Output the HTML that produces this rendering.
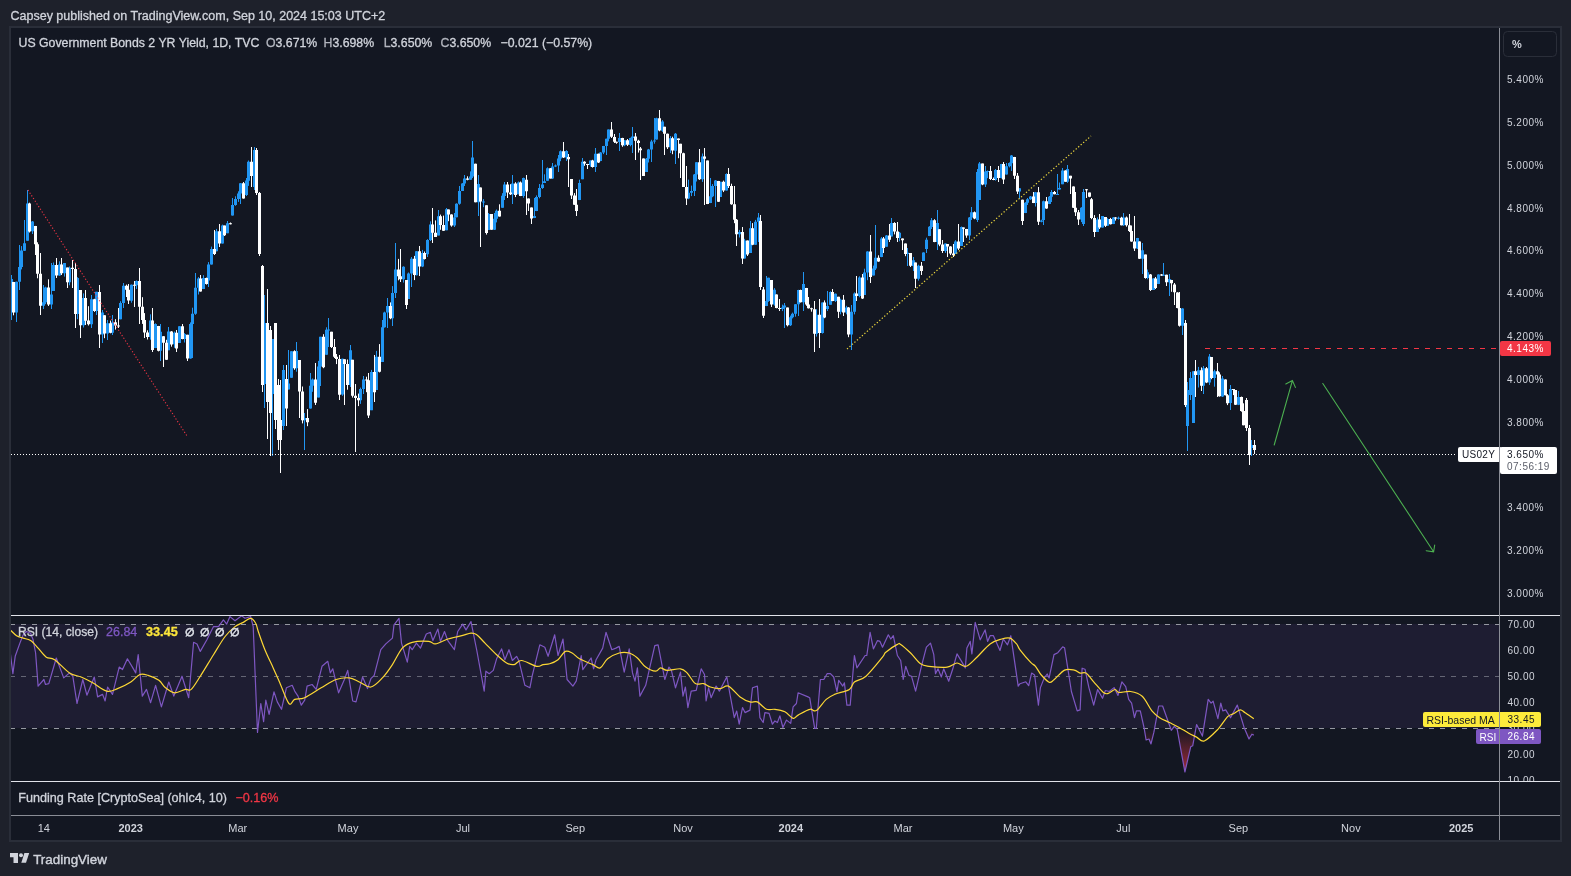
<!DOCTYPE html>
<html><head><meta charset="utf-8"><style>
html,body{margin:0;padding:0;}
body{width:1571px;height:876px;background:#1e212b;position:relative;overflow:hidden;font-family:"Liberation Sans", sans-serif;}
.t{position:absolute;white-space:pre;line-height:1;}
svg{position:absolute;left:0;top:0;will-change:transform;}
text{paint-order:stroke;}
</style></head><body>
<svg width="1571" height="876" viewBox="0 0 1571 876" font-family='"Liberation Sans", sans-serif'>
<defs>
<clipPath id="pp"><rect x="11" y="28" width="1488" height="587"/></clipPath>
<clipPath id="rp"><rect x="11" y="616" width="1488" height="165"/></clipPath>
<clipPath id="ra"><rect x="1500" y="616" width="60" height="165"/></clipPath>
<clipPath id="os"><rect x="11" y="728.5" width="1488" height="52"/></clipPath>
<linearGradient id="og" x1="0" y1="728" x2="0" y2="780" gradientUnits="userSpaceOnUse">
<stop offset="0" stop-color="#f23645" stop-opacity="0"/><stop offset="1" stop-color="#f23645" stop-opacity="0.75"/>
</linearGradient>
</defs>
<!-- frame -->
<rect x="9" y="26" width="1553" height="816" fill="#2a2e39"/>
<rect x="11" y="28" width="1549" height="812" fill="#131722"/>
<!-- price pane -->
<g clip-path="url(#pp)">
<path d="M11.5 275.0V320.0M16.5 281.6V322.0M19.5 245.0V290.0M21.5 246.1V269.4M24.5 220.0V251.0M27.5 190.0V240.8M32.5 221.0V234.0M43.5 285.0V309.0M45.5 286.7V304.2M51.5 263.0V309.0M53.5 262.5V291.0M59.5 261.3V275.8M64.5 263.0V276.6M69.5 266.5V285.3M77.5 277.2V319.2M83.5 293.4V327.5M91.5 295.0V328.0M96.5 291.8V315.0M102.5 310.0V343.0M107.5 320.0V340.0M112.5 315.0V335.0M120.5 301.2V319.3M123.5 283.0V308.0M131.5 284.5V302.7M136.5 280.4V289.0M150.5 314.3V339.7M155.5 323.3V348.1M160.5 324.0V361.0M168.5 327.0V350.2M174.5 331.5V347.8M179.5 326.2V343.0M184.5 333.1V342.5M190.5 322.4V358.7M192.5 307.7V358.0M195.5 273.0V314.8M198.5 277.1V294.5M203.5 275.2V289.1M208.5 262.1V287.0M211.5 246.6V264.6M216.5 228.9V251.3M222.5 224.6V243.6M227.5 221.0V233.2M232.5 198.0V215.6M235.5 196.3V205.8M238.5 191.3V201.9M240.5 183.0V204.0M246.5 178.0V196.0M248.5 160.5V185.9M254.5 147.0V190.0M264.5 295.0V408.0M272.5 339.0V456.0M283.5 365.0V430.0M288.5 350.0V389.4M291.5 351.2V377.8M296.5 342.0V371.7M304.5 413.0V450.0M310.5 373.0V408.6M312.5 378.5V391.8M318.5 360.9V397.4M320.5 336.8V386.0M326.5 327.3V354.8M328.5 318.0V347.0M342.5 358.7V395.8M350.5 345.0V387.0M360.5 387.6V403.9M363.5 376.0V394.0M371.5 369.9V410.1M376.5 350.9V390.0M382.5 320.0V362.0M384.5 311.7V327.6M387.5 298.0V328.0M392.5 286.1V326.0M395.5 243.0V298.0M403.5 266.3V282.6M408.5 272.5V298.9M411.5 257.0V287.0M416.5 251.0V275.4M422.5 249.9V267.1M427.5 239.2V257.0M430.5 221.3V241.0M438.5 210.0V235.4M446.5 208.0V230.2M454.5 213.0V227.0M456.5 203.3V217.3M459.5 186.0V204.7M462.5 183.1V191.0M464.5 175.0V186.0M470.5 171.4V179.7M472.5 141.0V178.1M478.5 175.0V216.0M483.5 199.1V207.2M488.5 213.0V230.0M494.5 213.0V230.0M496.5 209.5V222.4M502.5 193.2V207.7M504.5 182.0V200.0M512.5 175.0V204.0M518.5 181.5V194.3M523.5 177.6V197.8M534.5 198.0V218.1M536.5 195.4V211.1M539.5 184.0V198.3M542.5 160.0V188.9M544.5 174.3V182.9M547.5 167.4V180.8M552.5 163.0V179.0M555.5 164.5V167.1M558.5 155.0V172.0M560.5 150.4V161.2M566.5 150.2V161.0M579.5 179.7V200.1M582.5 158.0V179.2M590.5 160.4V166.7M595.5 148.0V172.0M600.5 152.1V161.2M603.5 145.9V154.1M606.5 138.7V155.0M608.5 129.4V141.4M619.5 133.0V151.0M624.5 140.1V146.2M630.5 137.7V146.3M632.5 127.0V153.0M646.5 158.0V171.9M648.5 148.9V162.5M651.5 139.8V162.0M654.5 118.0V143.7M656.5 117.7V139.6M662.5 120.1V131.9M670.5 136.0V153.0M675.5 133.0V164.0M688.5 179.6V199.2M691.5 185.6V196.1M694.5 174.0V196.0M696.5 162.1V181.5M702.5 153.5V181.9M710.5 178.0V203.1M712.5 184.1V197.2M715.5 180.0V207.0M720.5 181.8V197.0M726.5 173.3V190.5M739.5 229.9V237.5M744.5 238.8V258.5M750.5 221.0V253.0M755.5 219.9V244.9M758.5 213.0V242.0M766.5 276.0V306.1M768.5 277.7V301.8M774.5 288.1V305.7M782.5 304.6V311.1M784.5 303.0V328.0M790.5 315.6V326.0M792.5 312.6V318.4M795.5 304.1V316.7M798.5 289.8V316.0M803.5 272.0V311.0M816.5 309.2V336.6M822.5 302.5V333.6M827.5 291.0V311.0M830.5 291.3V304.6M835.5 293.5V302.0M840.5 298.7V314.3M846.5 305.8V314.3M851.5 305.0V350.0M854.5 292.4V314.4M859.5 276.3V297.3M864.5 268.7V295.0M867.5 251.2V280.2M873.5 265.6V275.4M875.5 225.0V270.0M881.5 237.0V257.2M886.5 235.0V246.7M891.5 218.0V236.4M899.5 232.0V241.3M907.5 248.0V266.0M913.5 257.0V271.0M918.5 264.7V280.6M923.5 252.3V261.0M926.5 237.7V253.0M929.5 226.1V236.1M931.5 218.0V229.0M937.5 210.0V250.0M945.5 243.4V252.9M955.5 240.2V253.9M961.5 226.5V245.9M969.5 217.0V240.0M971.5 207.0V220.0M977.5 169.0V222.0M979.5 162.0V199.9M985.5 166.0V187.0M987.5 170.5V178.2M995.5 169.0V180.7M1001.5 163.9V178.4M1006.5 163.0V174.6M1009.5 162.4V167.4M1011.5 155.0V171.0M1019.5 188.2V199.0M1025.5 202.2V213.1M1027.5 198.0V205.0M1030.5 196.0V199.9M1035.5 191.9V206.5M1041.5 219.7V222.3M1043.5 200.6V225.0M1049.5 196.0V204.1M1051.5 190.0V202.0M1057.5 174.0V194.3M1059.5 182.5V189.5M1062.5 168.0V184.2M1067.5 165.0V182.9M1081.5 207.2V222.1M1083.5 189.0V226.0M1097.5 217.4V232.0M1102.5 216.0V227.6M1107.5 218.2V225.7M1113.5 217.0V224.1M1118.5 216.6V219.6M1123.5 213.0V226.0M1137.5 237.9V249.0M1142.5 243.0V274.0M1147.5 269.5V279.3M1153.5 278.2V290.0M1158.5 274.4V284.1M1163.5 263.0V275.8M1169.5 274.0V296.0M1182.5 308.2V335.0M1187.5 382.0V451.0M1190.5 372.0V400.0M1193.5 371.2V422.9M1198.5 366.9V387.5M1203.5 366.0V394.0M1209.5 354.0V385.0M1214.5 369.7V386.7M1222.5 376.0V397.0M1230.5 385.0V410.0M1238.5 391.0V405.1M1251.5 440.0V456.0" stroke="#2196f3" stroke-width="1" fill="none"/><path d="M10 278.9h3v19.6h-3zM15 281.8h3v30.8h-3zM18 267.0h3v14.8h-3zM20 250.6h3v16.4h-3zM23 243.3h3v7.4h-3zM26 203.5h3v37.3h-3zM31 221.5h3v9.8h-3zM42 302.2h3v3.5h-3zM44 287.4h3v14.8h-3zM50 294.6h3v9.9h-3zM52 265.0h3v26.0h-3zM58 264.5h3v11.1h-3zM63 263.1h3v10.2h-3zM68 267.8h3v14.5h-3zM76 277.9h3v36.2h-3zM82 298.1h3v27.2h-3zM90 299.3h3v25.0h-3zM95 291.8h3v19.3h-3zM101 312.5h3v21.9h-3zM106 323.2h3v10.2h-3zM111 322.3h3v10.4h-3zM119 303.1h3v16.2h-3zM122 285.7h3v17.4h-3zM130 284.8h3v15.9h-3zM135 281.0h3v4.3h-3zM149 320.6h3v16.3h-3zM154 324.0h3v24.1h-3zM159 331.8h3v18.9h-3zM167 331.4h3v18.8h-3zM173 332.7h3v11.6h-3zM178 326.2h3v16.7h-3zM183 333.9h3v5.2h-3zM189 324.1h3v34.5h-3zM191 313.8h3v10.3h-3zM194 287.8h3v26.0h-3zM197 278.5h3v9.3h-3zM202 278.0h3v11.1h-3zM207 264.4h3v16.1h-3zM210 248.9h3v15.6h-3zM215 231.3h3v20.0h-3zM221 225.6h3v18.0h-3zM226 223.2h3v10.0h-3zM231 204.9h3v10.6h-3zM234 198.9h3v6.1h-3zM237 193.4h3v5.5h-3zM239 183.2h3v10.2h-3zM245 180.6h3v14.4h-3zM247 161.8h3v18.9h-3zM253 150.0h3v37.0h-3zM263 323.0h3v61.0h-3zM271 339.0h3v55.0h-3zM282 370.0h3v56.0h-3zM287 383.6h3v5.8h-3zM290 351.2h3v26.6h-3zM295 351.0h3v17.2h-3zM303 418.0h3v2.3h-3zM309 385.7h3v22.9h-3zM311 379.4h3v6.3h-3zM317 366.6h3v30.8h-3zM319 336.8h3v29.8h-3zM325 329.7h3v25.1h-3zM327 329.5h3v1.0h-3zM341 358.8h3v35.8h-3zM349 350.3h3v34.8h-3zM359 389.0h3v11.3h-3zM362 379.6h3v9.4h-3zM370 372.1h3v38.1h-3zM375 356.8h3v33.2h-3zM381 327.2h3v34.8h-3zM383 312.5h3v14.7h-3zM386 306.0h3v6.5h-3zM391 293.0h3v25.3h-3zM394 269.5h3v23.5h-3zM402 266.7h3v12.6h-3zM407 273.5h3v25.4h-3zM410 258.8h3v14.6h-3zM415 251.2h3v24.0h-3zM421 253.1h3v13.4h-3zM426 240.1h3v14.2h-3zM429 224.6h3v15.5h-3zM437 216.2h3v19.2h-3zM445 209.3h3v20.9h-3zM453 217.4h3v8.1h-3zM455 203.8h3v13.5h-3zM458 190.9h3v12.9h-3zM461 183.5h3v7.5h-3zM463 178.4h3v5.1h-3zM469 176.6h3v3.2h-3zM471 157.5h3v19.1h-3zM477 183.9h3v18.4h-3zM482 201.6h3v1.0h-3zM487 214.1h3v15.9h-3zM493 218.8h3v10.9h-3zM495 210.7h3v8.1h-3zM501 195.8h3v11.9h-3zM503 184.4h3v11.5h-3zM511 183.4h3v10.8h-3zM517 182.4h3v11.8h-3zM522 178.0h3v18.1h-3zM533 215.9h3v2.2h-3zM535 197.0h3v14.1h-3zM538 188.0h3v9.0h-3zM541 184.5h3v3.6h-3zM543 181.3h3v1.6h-3zM546 168.3h3v12.5h-3zM551 166.6h3v11.9h-3zM554 165.4h3v1.2h-3zM557 158.4h3v7.0h-3zM559 151.3h3v7.2h-3zM565 151.1h3v6.3h-3zM578 183.1h3v16.9h-3zM581 161.8h3v17.5h-3zM589 160.5h3v4.4h-3zM594 153.8h3v13.3h-3zM599 152.4h3v8.7h-3zM602 146.0h3v6.5h-3zM605 138.7h3v7.3h-3zM607 129.6h3v9.1h-3zM618 137.9h3v4.2h-3zM623 140.3h3v5.0h-3zM629 138.1h3v6.8h-3zM631 136.4h3v1.6h-3zM645 158.7h3v13.3h-3zM647 149.6h3v9.1h-3zM650 141.6h3v8.0h-3zM653 140.5h3v1.1h-3zM655 118.3h3v21.3h-3zM661 121.6h3v9.1h-3zM669 138.3h3v8.9h-3zM674 133.8h3v16.9h-3zM687 192.7h3v5.8h-3zM690 191.1h3v1.7h-3zM693 174.5h3v16.5h-3zM695 162.3h3v12.3h-3zM701 156.5h3v22.7h-3zM709 196.3h3v6.8h-3zM711 185.9h3v10.4h-3zM714 180.5h3v5.4h-3zM719 181.8h3v15.2h-3zM725 173.9h3v16.6h-3zM738 232.1h3v2.1h-3zM743 240.6h3v17.9h-3zM749 228.3h3v24.6h-3zM754 221.8h3v23.0h-3zM757 217.5h3v4.3h-3zM765 301.0h3v5.1h-3zM767 277.8h3v23.2h-3zM773 289.7h3v14.8h-3zM781 307.5h3v1.4h-3zM783 305.5h3v2.0h-3zM789 317.2h3v8.0h-3zM791 313.7h3v3.5h-3zM794 304.3h3v9.4h-3zM797 289.9h3v14.4h-3zM802 284.1h3v18.2h-3zM815 314.7h3v19.1h-3zM821 302.5h3v30.5h-3zM826 305.9h3v3.2h-3zM829 291.9h3v12.8h-3zM834 293.7h3v7.3h-3zM839 299.8h3v11.9h-3zM845 307.4h3v5.2h-3zM850 311.7h3v22.9h-3zM853 293.4h3v18.3h-3zM858 277.6h3v18.5h-3zM863 272.4h3v22.6h-3zM866 251.6h3v20.8h-3zM872 268.6h3v6.8h-3zM874 257.8h3v10.8h-3zM880 238.4h3v18.7h-3zM885 235.4h3v11.4h-3zM890 223.1h3v13.4h-3zM898 232.8h3v5.1h-3zM906 252.7h3v1.4h-3zM912 260.2h3v5.7h-3zM917 265.8h3v13.0h-3zM922 252.4h3v8.6h-3zM925 239.7h3v9.2h-3zM928 226.8h3v9.3h-3zM930 220.2h3v6.7h-3zM936 223.1h3v18.9h-3zM944 243.6h3v7.4h-3zM954 241.5h3v12.4h-3zM960 226.9h3v19.0h-3zM968 217.5h3v17.9h-3zM970 212.3h3v5.2h-3zM976 172.0h3v48.0h-3zM978 163.6h3v36.3h-3zM984 171.6h3v12.9h-3zM986 171.0h3v1.0h-3zM994 170.0h3v9.9h-3zM1000 164.0h3v13.9h-3zM1005 166.2h3v8.4h-3zM1008 163.1h3v3.1h-3zM1010 155.6h3v7.6h-3zM1018 188.3h3v3.3h-3zM1024 202.7h3v10.4h-3zM1026 199.2h3v3.5h-3zM1029 196.4h3v2.8h-3zM1034 192.3h3v10.7h-3zM1040 220.4h3v1.4h-3zM1042 201.3h3v18.7h-3zM1048 196.8h3v7.2h-3zM1050 191.9h3v4.9h-3zM1056 194.1h3v1.0h-3zM1058 188.1h3v1.4h-3zM1061 170.5h3v13.7h-3zM1066 169.1h3v12.6h-3zM1080 207.7h3v11.9h-3zM1082 192.0h3v32.0h-3zM1096 219.4h3v12.5h-3zM1101 216.0h3v11.5h-3zM1106 219.0h3v6.7h-3zM1112 217.5h3v6.6h-3zM1117 217.7h3v1.0h-3zM1122 217.5h3v7.7h-3zM1136 238.0h3v10.5h-3zM1141 250.3h3v8.5h-3zM1146 272.2h3v5.9h-3zM1152 278.5h3v11.4h-3zM1157 274.5h3v9.6h-3zM1162 274.8h3v1.0h-3zM1168 278.9h3v3.4h-3zM1181 308.6h3v17.1h-3zM1186 390.0h3v36.0h-3zM1189 378.0h3v17.0h-3zM1192 371.3h3v51.7h-3zM1197 370.3h3v4.6h-3zM1202 368.3h3v17.4h-3zM1208 356.5h3v26.0h-3zM1213 371.2h3v6.7h-3zM1221 378.5h3v17.9h-3zM1229 389.1h3v14.0h-3zM1237 396.9h3v7.8h-3zM1250 445.0h3v3.0h-3z" fill="#2196f3"/><path d="M13.5 281.9V315.3M29.5 202.7V232.5M35.5 225.9V255.0M37.5 242.3V278.3M40.5 253.0V315.0M48.5 279.3V306.0M56.5 258.0V278.0M61.5 258.0V275.0M67.5 267.6V288.0M72.5 260.0V288.0M75.5 263.0V328.0M80.5 290.0V338.0M85.5 290.0V325.0M88.5 306.2V325.5M94.5 298.8V311.9M99.5 285.0V348.0M104.5 315.3V338.2M110.5 320.6V333.3M115.5 319.2V329.6M118.5 308.0V328.0M126.5 284.6V297.0M128.5 284.0V304.0M134.5 281.0V307.0M139.5 268.0V324.0M142.5 297.2V323.9M144.5 313.1V338.0M147.5 330.3V339.5M152.5 308.0V352.0M158.5 325.9V351.4M163.5 336.2V367.0M166.5 339.8V359.9M171.5 331.1V346.7M176.5 330.0V352.0M182.5 324.0V339.3M187.5 334.8V361.0M200.5 275.0V291.6M206.5 277.6V284.6M214.5 230.0V255.0M219.5 224.0V247.0M224.5 225.6V236.0M230.5 222.5V224.4M243.5 182.0V198.6M251.5 147.0V187.0M256.5 148.0V195.0M259.5 192.0V256.0M262.5 265.0V392.0M267.5 289.0V439.0M270.5 326.0V456.0M275.5 323.0V429.0M278.5 379.0V450.0M280.5 380.0V473.0M286.5 365.0V426.0M294.5 350.3V369.8M299.5 360.0V418.0M302.5 386.5V423.4M307.5 409.1V426.2M315.5 363.0V405.0M323.5 334.2V368.2M331.5 331.8V348.0M334.5 339.0V358.0M336.5 354.0V364.1M339.5 355.0V400.0M344.5 359.3V405.0M347.5 359.5V389.7M352.5 359.8V397.6M355.5 384.0V452.0M358.5 393.6V406.1M366.5 376.7V392.2M368.5 373.0V418.0M374.5 355.0V402.0M379.5 344.1V372.4M390.5 302.4V319.2M398.5 258.9V280.3M400.5 249.0V282.0M406.5 280.0V309.0M414.5 255.9V280.1M419.5 246.0V276.0M424.5 251.5V259.5M432.5 208.0V243.0M435.5 220.4V236.9M440.5 214.6V229.8M443.5 215.6V230.9M448.5 209.5V221.2M451.5 214.3V226.7M467.5 176.3V180.3M475.5 163.7V202.3M480.5 187.5V247.0M486.5 205.3V234.6M491.5 214.0V229.8M499.5 204.3V216.6M507.5 182.0V198.0M510.5 184.2V195.0M515.5 182.2V197.1M520.5 181.5V196.1M526.5 175.0V215.0M528.5 198.5V211.0M531.5 207.5V224.0M550.5 168.0V178.5M563.5 142.0V158.0M568.5 154.0V187.0M571.5 179.1V199.0M574.5 193.1V204.8M576.5 189.0V216.0M584.5 161.2V165.8M587.5 163.9V169.0M592.5 159.8V167.6M598.5 153.6V163.0M611.5 122.0V138.0M614.5 134.0V143.0M616.5 141.7V143.8M622.5 137.8V146.8M627.5 139.0V146.0M635.5 133.0V160.0M638.5 139.8V152.6M640.5 147.0V180.0M643.5 158.5V176.0M659.5 110.0V131.3M664.5 126.8V155.0M667.5 133.6V149.0M672.5 136.7V154.2M678.5 138.5V158.2M680.5 143.8V178.0M683.5 152.7V186.9M686.5 166.0V205.0M699.5 149.0V180.0M704.5 148.0V205.0M707.5 160.6V204.1M718.5 180.9V201.9M723.5 180.6V192.1M728.5 168.0V188.0M731.5 183.7V204.8M734.5 186.0V223.2M736.5 219.0V246.0M742.5 227.0V264.0M747.5 240.5V256.0M752.5 223.1V245.2M760.5 215.0V290.0M763.5 287.0V318.0M771.5 280.1V307.0M776.5 294.4V308.3M779.5 299.0V311.0M787.5 307.6V326.4M800.5 289.7V302.5M806.5 287.9V305.8M808.5 297.0V308.5M811.5 307.7V311.7M814.5 301.0V352.0M819.5 299.0V348.0M824.5 300.4V318.2M832.5 289.0V301.2M838.5 296.8V318.0M843.5 295.0V316.0M848.5 307.1V337.2M856.5 276.0V301.0M862.5 274.0V299.0M870.5 235.0V283.0M878.5 255.3V261.8M883.5 237.0V253.0M889.5 224.0V242.0M894.5 222.2V234.4M897.5 222.0V242.0M902.5 238.5V250.0M905.5 243.5V256.2M910.5 253.1V267.0M915.5 262.6V288.0M921.5 262.0V275.0M934.5 219.2V242.2M939.5 229.2V246.2M942.5 240.0V253.0M947.5 244.0V257.0M950.5 246.2V255.1M953.5 244.0V257.0M958.5 224.0V250.0M963.5 227.5V242.0M966.5 228.9V237.8M974.5 211.5V219.2M982.5 163.6V185.2M990.5 166.0V180.0M993.5 177.5V180.2M998.5 166.0V182.0M1003.5 162.0V184.0M1014.5 156.9V179.0M1017.5 173.0V194.0M1022.5 199.7V225.0M1033.5 192.0V203.1M1038.5 187.0V225.0M1046.5 197.0V208.8M1054.5 191.0V194.3M1065.5 170.3V181.8M1070.5 175.8V194.0M1073.5 186.4V207.9M1075.5 192.0V216.0M1078.5 210.0V225.0M1086.5 189.0V198.0M1089.5 192.6V197.2M1091.5 198.0V219.2M1094.5 215.1V237.0M1099.5 214.0V229.0M1105.5 217.0V227.0M1110.5 217.9V224.5M1115.5 217.1V220.6M1121.5 216.8V225.4M1126.5 216.5V226.7M1129.5 214.0V232.0M1131.5 225.5V241.8M1134.5 216.0V251.0M1139.5 241.4V259.0M1145.5 254.6V278.7M1150.5 274.0V291.0M1155.5 277.0V289.0M1161.5 274.0V275.9M1166.5 274.7V286.0M1171.5 279.9V291.8M1174.5 283.0V305.0M1177.5 292.2V308.3M1179.5 292.0V326.6M1185.5 320.0V407.0M1195.5 360.0V397.0M1201.5 367.4V391.0M1206.5 367.0V383.1M1211.5 357.0V379.2M1217.5 363.0V397.0M1219.5 372.3V396.6M1225.5 379.4V395.4M1227.5 394.1V405.1M1233.5 389.0V395.1M1235.5 390.0V405.0M1241.5 396.6V411.7M1243.5 403.3V425.3M1246.5 398.0V431.0M1249.5 425.0V465.0M1254.5 440.0V454.0" stroke="#ffffff" stroke-width="1" fill="none"/><path d="M12 281.9h3v30.7h-3zM28 203.5h3v27.9h-3zM34 225.9h3v18.3h-3zM36 244.2h3v29.5h-3zM39 273.7h3v32.0h-3zM47 287.4h3v17.1h-3zM55 265.0h3v10.6h-3zM60 264.5h3v8.8h-3zM66 267.6h3v14.7h-3zM71 267.8h3v1.2h-3zM74 269.0h3v45.0h-3zM79 290.0h3v35.3h-3zM84 298.1h3v22.6h-3zM87 320.6h3v3.7h-3zM93 299.3h3v11.8h-3zM98 292.0h3v42.5h-3zM103 315.3h3v18.1h-3zM109 323.2h3v9.6h-3zM114 322.3h3v3.3h-3zM117 325.6h3v1.0h-3zM125 285.7h3v4.1h-3zM127 289.8h3v10.8h-3zM133 284.8h3v1.0h-3zM138 281.0h3v25.8h-3zM141 306.8h3v13.1h-3zM143 319.9h3v12.5h-3zM146 332.4h3v4.6h-3zM151 320.6h3v29.5h-3zM157 325.9h3v24.9h-3zM162 336.2h3v6.6h-3zM165 342.8h3v17.0h-3zM170 331.4h3v13.0h-3zM175 332.7h3v15.9h-3zM181 326.2h3v12.8h-3zM186 334.8h3v23.8h-3zM199 278.5h3v13.0h-3zM205 278.0h3v6.1h-3zM213 248.9h3v5.2h-3zM218 231.3h3v12.3h-3zM223 225.6h3v9.7h-3zM229 223.2h3v1.1h-3zM242 183.2h3v15.2h-3zM250 161.8h3v14.1h-3zM255 150.0h3v43.0h-3zM258 193.0h3v61.0h-3zM261 266.0h3v119.0h-3zM266 323.0h3v79.0h-3zM269 330.0h3v83.0h-3zM274 323.0h3v97.0h-3zM277 385.0h3v55.0h-3zM279 420.0h3v20.0h-3zM285 378.9h3v29.5h-3zM293 351.2h3v17.0h-3zM298 360.0h3v31.5h-3zM301 391.5h3v28.8h-3zM306 418.0h3v4.2h-3zM314 379.4h3v23.3h-3zM322 336.8h3v30.5h-3zM330 331.8h3v15.1h-3zM333 346.9h3v9.8h-3zM335 356.7h3v2.4h-3zM338 359.1h3v35.6h-3zM343 359.3h3v4.8h-3zM346 364.1h3v20.9h-3zM351 359.8h3v35.9h-3zM354 395.7h3v2.3h-3zM357 397.9h3v2.4h-3zM365 379.6h3v1.0h-3zM367 380.3h3v35.3h-3zM373 372.1h3v20.2h-3zM378 356.8h3v14.9h-3zM389 306.0h3v12.3h-3zM397 269.5h3v6.7h-3zM399 276.2h3v3.1h-3zM405 280.0h3v24.9h-3zM413 258.8h3v16.3h-3zM418 251.2h3v15.3h-3zM423 253.1h3v5.9h-3zM431 224.6h3v8.2h-3zM434 232.8h3v4.1h-3zM439 216.2h3v8.9h-3zM442 225.1h3v5.6h-3zM447 209.5h3v5.0h-3zM450 214.4h3v11.0h-3zM466 178.4h3v1.4h-3zM474 163.7h3v38.6h-3zM479 187.5h3v14.1h-3zM485 205.3h3v27.8h-3zM490 214.1h3v15.6h-3zM498 210.7h3v5.9h-3zM506 184.4h3v8.1h-3zM509 192.4h3v1.8h-3zM514 183.4h3v11.6h-3zM519 182.4h3v13.7h-3zM525 179.8h3v11.5h-3zM527 198.5h3v4.9h-3zM530 207.5h3v11.1h-3zM549 168.3h3v10.2h-3zM562 151.3h3v6.1h-3zM567 157.1h3v2.2h-3zM570 179.1h3v16.3h-3zM573 195.4h3v9.3h-3zM575 204.8h3v6.1h-3zM583 161.8h3v1.7h-3zM586 163.9h3v1.0h-3zM591 160.5h3v6.6h-3zM597 153.8h3v8.7h-3zM610 129.6h3v7.2h-3zM613 136.9h3v4.9h-3zM615 141.7h3v1.0h-3zM621 137.9h3v7.4h-3zM626 140.3h3v4.5h-3zM634 136.4h3v4.3h-3zM637 140.7h3v2.4h-3zM639 148.5h3v1.7h-3zM642 158.5h3v17.4h-3zM658 118.3h3v12.3h-3zM663 126.8h3v6.9h-3zM666 133.7h3v13.5h-3zM671 138.3h3v12.3h-3zM677 138.5h3v1.5h-3zM679 143.8h3v9.4h-3zM682 153.2h3v33.7h-3zM685 186.9h3v11.6h-3zM698 162.3h3v17.0h-3zM703 156.5h3v2.2h-3zM706 160.6h3v43.5h-3zM717 180.9h3v20.9h-3zM722 181.8h3v8.6h-3zM727 173.9h3v12.2h-3zM730 186.1h3v18.1h-3zM733 204.2h3v15.5h-3zM735 219.7h3v14.5h-3zM741 232.1h3v26.5h-3zM746 240.6h3v13.9h-3zM751 228.3h3v16.4h-3zM759 221.0h3v66.0h-3zM762 289.4h3v26.4h-3zM770 280.1h3v24.4h-3zM775 294.4h3v13.6h-3zM778 308.0h3v1.0h-3zM786 307.6h3v17.6h-3zM799 289.9h3v12.4h-3zM805 287.9h3v16.6h-3zM807 304.4h3v3.9h-3zM810 308.3h3v1.0h-3zM813 309.2h3v24.6h-3zM818 314.7h3v18.3h-3zM823 302.5h3v15.1h-3zM831 291.9h3v9.2h-3zM837 296.8h3v14.9h-3zM842 299.8h3v12.8h-3zM847 307.4h3v27.2h-3zM855 293.4h3v2.7h-3zM861 277.6h3v20.8h-3zM869 251.6h3v25.3h-3zM877 257.8h3v3.8h-3zM882 238.4h3v9.6h-3zM888 235.4h3v4.4h-3zM893 223.1h3v8.4h-3zM896 231.5h3v6.4h-3zM901 238.5h3v1.7h-3zM904 243.5h3v10.6h-3zM909 253.1h3v12.7h-3zM914 262.6h3v16.2h-3zM920 265.8h3v5.3h-3zM933 220.2h3v21.8h-3zM938 229.2h3v15.2h-3zM941 244.4h3v6.5h-3zM946 244.0h3v2.4h-3zM949 246.4h3v7.0h-3zM952 253.4h3v1.9h-3zM957 241.5h3v7.0h-3zM962 227.5h3v1.3h-3zM965 228.9h3v6.5h-3zM973 212.3h3v6.1h-3zM981 163.6h3v20.9h-3zM989 171.0h3v8.1h-3zM992 179.1h3v1.0h-3zM997 170.0h3v7.9h-3zM1002 164.0h3v15.5h-3zM1013 156.9h3v18.8h-3zM1016 175.7h3v15.9h-3zM1021 199.7h3v21.2h-3zM1032 196.4h3v6.7h-3zM1037 192.3h3v29.4h-3zM1045 201.3h3v7.2h-3zM1053 191.9h3v2.3h-3zM1064 170.5h3v11.2h-3zM1069 175.8h3v2.8h-3zM1072 186.4h3v21.4h-3zM1074 207.8h3v4.4h-3zM1077 212.2h3v7.4h-3zM1085 189.2h3v1.0h-3zM1088 192.6h3v4.1h-3zM1090 199.2h3v18.9h-3zM1093 218.0h3v13.9h-3zM1098 219.4h3v8.1h-3zM1104 217.0h3v8.7h-3zM1109 219.0h3v5.2h-3zM1114 217.5h3v1.0h-3zM1120 217.7h3v7.5h-3zM1125 217.5h3v7.8h-3zM1128 225.3h3v5.7h-3zM1130 231.0h3v10.6h-3zM1133 241.5h3v7.0h-3zM1138 241.4h3v17.4h-3zM1144 254.6h3v23.5h-3zM1149 274.4h3v15.7h-3zM1154 278.5h3v9.4h-3zM1160 274.5h3v1.0h-3zM1165 274.8h3v7.5h-3zM1170 279.9h3v3.3h-3zM1173 284.4h3v7.9h-3zM1176 292.4h3v15.7h-3zM1178 308.0h3v17.7h-3zM1184 323.0h3v82.0h-3zM1194 371.3h3v3.6h-3zM1200 370.3h3v15.5h-3zM1205 368.3h3v14.2h-3zM1210 357.0h3v20.9h-3zM1216 371.2h3v3.4h-3zM1218 374.5h3v21.8h-3zM1224 379.4h3v15.8h-3zM1226 395.2h3v8.0h-3zM1232 389.1h3v1.0h-3zM1234 390.0h3v14.7h-3zM1240 396.9h3v14.2h-3zM1242 411.1h3v14.2h-3zM1245 400.0h3v28.0h-3zM1248 428.0h3v27.0h-3zM1253 445.0h3v5.0h-3z" fill="#ffffff"/>
<line x1="28" y1="190" x2="187" y2="436" stroke="#f23645" stroke-width="1.1" stroke-dasharray="1.2 2"/>
<line x1="847" y1="349" x2="1091" y2="136" stroke="#ecd63e" stroke-width="1.2" stroke-dasharray="1.3 2"/>
<path d="M1205 348.5H1499" stroke="#f23645" stroke-width="1" stroke-dasharray="5 6"/>
<path d="M11 454.5H1457" stroke="#ffffff" stroke-width="1" stroke-dasharray="1 2"/>
<g stroke="#4caf50" stroke-width="1.1" fill="none" stroke-linecap="round">
<path d="M1274.2 445L1292.4 380.6M1285.8 384L1292.4 380.6L1295.4 387.4"/>
<path d="M1322.8 383.5L1433.6 551.8M1426.2 550.7L1433.6 551.8L1434.7 545"/>
</g>
</g>
<!-- pane separators -->
<rect x="11" y="615" width="1549" height="1" fill="#e1e3ea"/>
<rect x="11" y="781" width="1549" height="1" fill="#e1e3ea"/>
<rect x="11" y="815" width="1549" height="1" fill="#8a8d96"/>
<!-- rsi pane -->
<g clip-path="url(#rp)">
<rect x="11" y="624" width="1488" height="104" fill="#7e57c2" fill-opacity="0.1"/>
<g stroke="#9598a1" stroke-width="1" stroke-dasharray="5 6" stroke-dashoffset="1">
<path d="M11 624.5H1499M11 728.5H1499"/>
<path d="M11 676.5H1499" stroke-opacity="0.6"/>
</g>
<polygon points="10.3,728.2 10.3,653.0 12.9,673.7 15.2,656.3 19.9,643.1 23.2,634.8 26.5,631.5 30.6,633.2 33.1,639.8 35.6,653.0 38.1,686.1 43.9,679.5 45.5,684.5 48.8,683.6 56.3,658.0 63.7,677.9 69.5,672.9 72.8,676.2 77.0,703.5 82.8,679.5 86.9,695.2 94.3,677.0 97.6,696.9 102.6,694.4 105.1,701.0 107.6,687.0 112.5,694.4 119.2,667.1 122.5,669.6 127.4,658.8 132.4,667.1 135.7,672.9 138.2,654.7 142.3,696.1 146.5,689.4 150.6,702.7 155.6,685.3 161.4,706.8 168.8,682.0 173.8,696.1 182.0,676.2 188.7,697.7 193.6,642.3 197.0,644.0 200.3,651.4 206.9,639.8 213.5,626.6 218.5,626.6 223.4,619.9 226.7,624.1 230.0,616.6 235.0,620.8 241.6,615.8 245.0,618.3 250.7,616.6 253.2,626.6 255.0,671.2 257.5,732.5 260.8,703.5 263.6,721.7 265.8,700.2 269.1,714.3 274.0,691.9 277.3,701.9 281.5,709.3 286.4,687.8 292.2,685.3 294.7,691.1 298.0,696.1 301.3,705.2 304.7,700.2 307.1,686.1 312.1,684.5 316.2,689.4 322.0,666.3 327.8,661.3 330.3,672.9 332.8,668.8 338.6,692.8 344.4,679.5 347.7,670.4 352.7,701.0 356.0,701.9 362.6,677.0 367.5,688.6 370.9,678.7 374.2,675.4 380.8,649.7 385.8,643.9 392.4,638.1 394.0,624.9 399.0,618.3 401.5,643.1 407.3,662.1 409.7,646.4 412.2,649.7 416.4,643.1 420.5,648.1 426.3,634.0 430.4,632.3 432.9,640.6 437.9,629.0 440.4,641.4 444.5,631.5 447.8,640.6 454.4,649.7 457.7,631.5 462.7,624.1 466.0,629.9 471.0,621.6 476.8,650.5 484.2,691.1 485.9,671.2 489.2,673.7 493.3,670.4 496.6,658.8 501.6,648.9 504.9,659.7 509.0,649.7 512.4,660.5 516.6,656.3 519.1,661.3 524.9,685.3 529.9,687.8 532.3,675.4 539.8,644.8 544.8,647.2 548.1,656.3 554.7,634.8 558.0,655.5 563.0,639.0 567.1,679.5 572.9,686.1 576.2,681.2 581.2,655.5 582.8,669.6 591.1,658.0 593.6,668.8 596.1,659.7 602.7,648.1 606.0,632.3 611.8,649.7 615.9,648.1 619.2,646.4 624.2,672.1 629.2,648.9 632.5,672.9 635.0,681.2 637.4,667.9 639.9,696.1 645.7,685.3 654.8,645.6 658.1,644.8 664.8,679.5 668.9,667.1 671.4,670.4 675.5,687.8 680.5,672.1 683.0,696.1 685.4,687.0 687.9,707.6 691.2,691.1 696.2,690.3 701.2,668.8 704.5,674.5 706.1,701.0 708.6,687.8 711.1,697.7 716.1,686.1 719.4,691.1 726.8,677.0 734.3,717.6 736.7,711.0 739.2,724.2 742.5,707.6 745.0,712.6 750.0,710.1 752.5,687.8 757.4,686.1 759.9,717.6 763.2,722.5 764.9,712.6 769.1,713.4 772.4,724.2 774.9,720.9 777.4,722.5 779.9,715.9 782.9,727.5 786.5,720.1 790.7,723.4 793.1,706.8 796.4,703.5 798.1,692.8 808.0,696.9 809.7,697.7 814.7,728.3 816.3,728.3 820.4,679.5 823.8,679.5 827.1,673.7 830.4,673.7 833.7,677.0 837.0,691.9 838.7,680.3 842.8,686.1 844.4,682.8 846.9,705.2 850.2,705.2 854.4,655.5 856.9,667.9 865.1,655.5 866.8,655.5 870.1,632.3 873.4,648.9 877.5,640.6 880.0,641.4 882.5,647.2 888.3,634.8 890.8,639.0 893.3,635.7 897.4,655.5 900.7,660.5 903.2,679.5 905.7,666.3 909.0,675.4 911.5,676.2 915.6,691.1 921.4,666.3 926.4,647.2 930.5,643.1 933.8,654.7 935.5,673.7 938.0,668.8 941.3,677.0 943.7,668.8 948.7,681.2 952.8,668.8 957.0,653.9 962.0,662.1 965.3,667.9 966.9,648.1 970.2,641.4 971.9,653.9 975.2,622.4 980.2,639.8 985.1,629.9 987.6,641.4 990.1,635.7 993.4,635.7 1000.0,650.5 1003.3,639.0 1007.5,644.8 1010.8,635.7 1018.2,686.1 1020.0,683.7 1025.8,681.8 1028.7,685.7 1031.6,673.1 1034.6,675.0 1038.4,705.1 1040.4,687.6 1044.3,677.9 1047.2,674.0 1049.1,677.9 1054.0,654.6 1057.8,652.7 1062.7,646.9 1064.6,647.8 1071.4,691.5 1077.2,710.9 1080.1,709.9 1082.1,668.2 1085.0,669.2 1088.9,687.6 1093.7,705.1 1097.6,689.5 1102.5,698.3 1105.4,690.5 1109.3,691.5 1114.1,687.6 1118.0,695.4 1121.9,681.8 1125.7,686.6 1128.7,699.3 1131.6,703.1 1134.5,717.7 1136.4,710.9 1140.3,710.9 1144.2,728.4 1146.1,740.0 1149.0,739.0 1151.0,743.9 1153.9,732.2 1158.7,706.0 1162.6,706.0 1171.3,730.3 1174.3,726.4 1177.2,729.3 1184.9,772.0 1190.7,746.8 1192.7,745.8 1196.6,724.5 1202.4,736.1 1208.2,699.3 1211.1,703.1 1213.1,701.2 1217.9,718.7 1220.8,703.1 1222.8,710.9 1225.7,709.9 1230.5,717.7 1237.3,705.1 1244.1,727.4 1249.0,739.0 1251.9,734.2 1253.8,735.1 1253.8,728.2" fill="url(#og)" clip-path="url(#os)"/>
<polyline points="10.3,653.0 12.9,673.7 15.2,656.3 19.9,643.1 23.2,634.8 26.5,631.5 30.6,633.2 33.1,639.8 35.6,653.0 38.1,686.1 43.9,679.5 45.5,684.5 48.8,683.6 56.3,658.0 63.7,677.9 69.5,672.9 72.8,676.2 77.0,703.5 82.8,679.5 86.9,695.2 94.3,677.0 97.6,696.9 102.6,694.4 105.1,701.0 107.6,687.0 112.5,694.4 119.2,667.1 122.5,669.6 127.4,658.8 132.4,667.1 135.7,672.9 138.2,654.7 142.3,696.1 146.5,689.4 150.6,702.7 155.6,685.3 161.4,706.8 168.8,682.0 173.8,696.1 182.0,676.2 188.7,697.7 193.6,642.3 197.0,644.0 200.3,651.4 206.9,639.8 213.5,626.6 218.5,626.6 223.4,619.9 226.7,624.1 230.0,616.6 235.0,620.8 241.6,615.8 245.0,618.3 250.7,616.6 253.2,626.6 255.0,671.2 257.5,732.5 260.8,703.5 263.6,721.7 265.8,700.2 269.1,714.3 274.0,691.9 277.3,701.9 281.5,709.3 286.4,687.8 292.2,685.3 294.7,691.1 298.0,696.1 301.3,705.2 304.7,700.2 307.1,686.1 312.1,684.5 316.2,689.4 322.0,666.3 327.8,661.3 330.3,672.9 332.8,668.8 338.6,692.8 344.4,679.5 347.7,670.4 352.7,701.0 356.0,701.9 362.6,677.0 367.5,688.6 370.9,678.7 374.2,675.4 380.8,649.7 385.8,643.9 392.4,638.1 394.0,624.9 399.0,618.3 401.5,643.1 407.3,662.1 409.7,646.4 412.2,649.7 416.4,643.1 420.5,648.1 426.3,634.0 430.4,632.3 432.9,640.6 437.9,629.0 440.4,641.4 444.5,631.5 447.8,640.6 454.4,649.7 457.7,631.5 462.7,624.1 466.0,629.9 471.0,621.6 476.8,650.5 484.2,691.1 485.9,671.2 489.2,673.7 493.3,670.4 496.6,658.8 501.6,648.9 504.9,659.7 509.0,649.7 512.4,660.5 516.6,656.3 519.1,661.3 524.9,685.3 529.9,687.8 532.3,675.4 539.8,644.8 544.8,647.2 548.1,656.3 554.7,634.8 558.0,655.5 563.0,639.0 567.1,679.5 572.9,686.1 576.2,681.2 581.2,655.5 582.8,669.6 591.1,658.0 593.6,668.8 596.1,659.7 602.7,648.1 606.0,632.3 611.8,649.7 615.9,648.1 619.2,646.4 624.2,672.1 629.2,648.9 632.5,672.9 635.0,681.2 637.4,667.9 639.9,696.1 645.7,685.3 654.8,645.6 658.1,644.8 664.8,679.5 668.9,667.1 671.4,670.4 675.5,687.8 680.5,672.1 683.0,696.1 685.4,687.0 687.9,707.6 691.2,691.1 696.2,690.3 701.2,668.8 704.5,674.5 706.1,701.0 708.6,687.8 711.1,697.7 716.1,686.1 719.4,691.1 726.8,677.0 734.3,717.6 736.7,711.0 739.2,724.2 742.5,707.6 745.0,712.6 750.0,710.1 752.5,687.8 757.4,686.1 759.9,717.6 763.2,722.5 764.9,712.6 769.1,713.4 772.4,724.2 774.9,720.9 777.4,722.5 779.9,715.9 782.9,727.5 786.5,720.1 790.7,723.4 793.1,706.8 796.4,703.5 798.1,692.8 808.0,696.9 809.7,697.7 814.7,728.3 816.3,728.3 820.4,679.5 823.8,679.5 827.1,673.7 830.4,673.7 833.7,677.0 837.0,691.9 838.7,680.3 842.8,686.1 844.4,682.8 846.9,705.2 850.2,705.2 854.4,655.5 856.9,667.9 865.1,655.5 866.8,655.5 870.1,632.3 873.4,648.9 877.5,640.6 880.0,641.4 882.5,647.2 888.3,634.8 890.8,639.0 893.3,635.7 897.4,655.5 900.7,660.5 903.2,679.5 905.7,666.3 909.0,675.4 911.5,676.2 915.6,691.1 921.4,666.3 926.4,647.2 930.5,643.1 933.8,654.7 935.5,673.7 938.0,668.8 941.3,677.0 943.7,668.8 948.7,681.2 952.8,668.8 957.0,653.9 962.0,662.1 965.3,667.9 966.9,648.1 970.2,641.4 971.9,653.9 975.2,622.4 980.2,639.8 985.1,629.9 987.6,641.4 990.1,635.7 993.4,635.7 1000.0,650.5 1003.3,639.0 1007.5,644.8 1010.8,635.7 1018.2,686.1 1020.0,683.7 1025.8,681.8 1028.7,685.7 1031.6,673.1 1034.6,675.0 1038.4,705.1 1040.4,687.6 1044.3,677.9 1047.2,674.0 1049.1,677.9 1054.0,654.6 1057.8,652.7 1062.7,646.9 1064.6,647.8 1071.4,691.5 1077.2,710.9 1080.1,709.9 1082.1,668.2 1085.0,669.2 1088.9,687.6 1093.7,705.1 1097.6,689.5 1102.5,698.3 1105.4,690.5 1109.3,691.5 1114.1,687.6 1118.0,695.4 1121.9,681.8 1125.7,686.6 1128.7,699.3 1131.6,703.1 1134.5,717.7 1136.4,710.9 1140.3,710.9 1144.2,728.4 1146.1,740.0 1149.0,739.0 1151.0,743.9 1153.9,732.2 1158.7,706.0 1162.6,706.0 1171.3,730.3 1174.3,726.4 1177.2,729.3 1184.9,772.0 1190.7,746.8 1192.7,745.8 1196.6,724.5 1202.4,736.1 1208.2,699.3 1211.1,703.1 1213.1,701.2 1217.9,718.7 1220.8,703.1 1222.8,710.9 1225.7,709.9 1230.5,717.7 1237.3,705.1 1244.1,727.4 1249.0,739.0 1251.9,734.2 1253.8,735.1" fill="none" stroke="#7e57c2" stroke-width="1.2" stroke-linejoin="round"/>
<path d="M10.3 629.9C11.4 630.9 14.5 634.3 16.6 635.7C18.8 637.1 20.9 637.3 23.2 638.1C25.5 638.9 28.1 638.9 30.6 640.6C33.1 642.3 35.5 645.3 38.1 648.1C40.7 650.9 43.5 655.3 46.3 657.2C49.0 659.1 50.7 657.1 54.6 659.7C58.5 662.3 65.1 670.0 69.5 672.9C73.9 675.8 77.2 675.4 81.1 677.0C85.0 678.6 88.4 680.4 92.7 682.8C97.0 685.1 102.7 690.1 106.8 691.1C110.9 692.1 113.5 690.1 117.5 688.6C121.5 687.1 127.1 684.4 130.8 682.0C134.5 679.6 137.0 675.6 139.9 674.5C142.8 673.4 144.9 674.4 148.1 675.4C151.3 676.4 156.0 678.2 158.9 680.3C161.8 682.4 162.9 685.7 165.5 687.8C168.1 689.9 171.3 692.5 174.6 692.8C177.9 693.1 182.6 690.0 185.4 689.4C188.2 688.8 188.7 691.6 191.2 689.4C193.7 687.2 196.6 682.0 200.3 676.2C204.0 670.4 209.4 661.3 213.5 654.7C217.6 648.1 221.5 641.2 225.1 636.5C228.7 631.8 232.0 629.0 235.0 626.6C238.0 624.2 240.7 623.8 243.3 622.4C245.9 621.0 248.6 618.2 250.7 618.3C252.8 618.4 254.4 621.0 255.7 623.2C257.0 625.4 256.8 627.1 258.3 631.5C259.8 635.9 262.4 643.6 264.9 649.7C267.4 655.8 270.7 662.4 273.2 667.9C275.7 673.4 277.2 676.9 279.8 682.8C282.4 688.7 286.4 700.7 288.9 703.5C291.4 706.3 292.1 700.4 294.7 699.4C297.3 698.4 300.3 699.6 304.7 697.7C309.1 695.8 316.0 690.8 321.2 687.8C326.4 684.8 331.4 681.1 336.1 679.5C340.8 677.9 345.4 677.5 349.3 677.9C353.2 678.3 355.7 680.5 359.3 682.0C362.9 683.5 367.0 687.7 370.9 687.0C374.8 686.3 378.8 681.6 382.4 677.9C386.0 674.2 389.1 669.6 392.4 664.6C395.7 659.6 399.0 651.8 402.3 648.1C405.6 644.4 407.8 643.4 412.2 642.3C416.6 641.2 424.9 641.1 428.8 641.4C432.7 641.7 432.2 644.3 435.4 643.9C438.6 643.5 443.4 640.4 447.8 639.0C452.2 637.6 458.0 636.7 461.9 635.7C465.8 634.7 468.5 633.4 471.0 633.2C473.5 633.1 474.5 633.1 476.8 634.8C479.1 636.4 481.7 639.8 485.0 643.1C488.3 646.4 493.0 651.4 496.6 654.7C500.2 658.0 503.7 661.4 506.6 663.0C509.5 664.6 511.6 665.0 514.1 664.6C516.6 664.2 517.9 660.2 521.6 660.5C525.3 660.8 532.9 665.6 536.5 666.3C540.1 667.0 540.9 665.0 543.1 664.6C545.3 664.2 547.2 664.6 549.7 663.8C552.2 663.0 555.4 661.8 558.0 659.7C560.6 657.6 563.0 652.5 565.4 651.4C567.8 650.3 569.8 651.8 572.1 653.0C574.5 654.2 576.0 656.9 579.5 658.8C583.0 660.7 589.3 663.1 592.8 664.6C596.2 666.1 597.7 668.9 600.2 667.9C602.7 666.9 604.4 661.3 607.6 658.8C610.8 656.3 615.6 654.0 619.2 653.0C622.8 652.0 626.2 652.2 629.2 653.0C632.2 653.8 634.6 655.6 637.4 658.0C640.1 660.4 642.7 664.9 645.7 667.1C648.7 669.3 653.1 671.1 655.6 671.2C658.1 671.3 658.7 668.0 660.6 667.9C662.5 667.8 663.9 670.2 667.2 670.4C670.5 670.5 677.2 668.4 680.5 668.8C683.8 669.2 684.6 670.4 687.1 672.9C689.6 675.4 692.6 681.8 695.4 683.6C698.1 685.4 701.1 683.0 703.6 683.6C706.1 684.2 707.5 686.2 710.3 687.0C713.1 687.8 717.2 688.8 720.2 688.6C723.2 688.5 725.2 684.7 728.5 686.1C731.8 687.5 736.5 694.3 740.1 696.9C743.7 699.5 747.1 701.1 750.0 701.9C752.9 702.7 754.6 700.7 757.4 701.9C760.1 703.1 763.6 708.1 766.5 709.3C769.4 710.5 771.8 708.9 774.9 709.3C778.0 709.7 781.9 710.3 784.9 711.8C787.9 713.3 790.9 717.8 793.1 718.4C795.3 719.0 795.3 716.6 798.1 715.1C800.9 713.6 806.7 710.0 809.7 709.3C812.7 708.5 813.5 712.2 816.3 710.6C819.0 709.0 823.2 702.1 826.2 699.4C829.2 696.7 830.6 696.1 834.5 694.4C838.4 692.7 846.1 691.5 849.4 689.4C852.7 687.3 851.6 684.2 854.4 682.0C857.2 679.8 861.3 680.3 866.0 676.2C870.7 672.1 879.2 661.2 882.5 657.2C885.8 653.2 883.3 654.3 885.8 652.2C888.3 650.1 894.9 645.7 897.4 644.4C899.9 643.1 898.5 643.0 900.7 644.4C902.9 645.8 907.3 649.8 910.6 653.0C913.9 656.2 917.6 661.6 920.6 663.8C923.6 666.0 924.5 665.8 928.9 666.3C933.3 666.8 942.4 667.6 947.1 667.1C951.8 666.6 953.8 663.1 957.0 663.0C960.2 662.9 962.8 667.3 966.1 666.3C969.4 665.3 972.9 660.9 976.9 657.2C980.9 653.5 986.0 646.9 990.1 643.9C994.2 640.9 998.4 640.0 1001.7 639.0C1005.0 638.0 1007.5 637.3 1010.0 638.1C1012.5 638.9 1014.9 642.0 1016.6 643.9C1018.3 645.8 1017.6 646.7 1020.0 649.8C1022.4 652.9 1028.1 659.6 1030.7 662.4C1033.3 665.1 1033.7 664.2 1035.5 666.3C1037.3 668.4 1039.0 672.4 1041.3 675.0C1043.6 677.6 1047.0 681.4 1049.1 682.2C1051.2 683.0 1051.4 681.8 1054.0 679.8C1056.6 677.8 1061.2 671.7 1064.6 670.1C1068.0 668.5 1071.7 669.6 1074.3 670.1C1076.9 670.6 1078.1 672.6 1080.1 673.1C1082.0 673.6 1083.7 671.7 1086.0 673.1C1088.3 674.5 1090.8 678.6 1093.7 681.8C1096.6 685.0 1101.0 690.6 1103.4 692.5C1105.8 694.4 1106.3 693.9 1108.3 693.4C1110.2 692.9 1113.3 689.6 1115.1 689.5C1116.9 689.4 1116.4 692.2 1119.0 692.5C1121.6 692.8 1126.7 690.9 1130.6 691.5C1134.5 692.1 1138.7 693.1 1142.2 696.3C1145.8 699.5 1149.0 707.3 1151.9 710.9C1154.8 714.5 1156.8 715.8 1159.7 717.7C1162.6 719.6 1166.2 720.9 1169.4 722.5C1172.6 724.1 1175.9 725.6 1179.1 727.4C1182.3 729.2 1185.9 731.6 1188.8 733.2C1191.7 734.8 1194.0 735.8 1196.6 737.1C1199.2 738.4 1200.8 742.3 1204.3 741.0C1207.8 739.7 1214.0 733.3 1217.9 729.3C1221.8 725.2 1225.0 719.3 1227.6 716.7C1230.2 714.1 1231.3 714.9 1233.4 713.8C1235.5 712.7 1238.2 710.1 1240.2 709.9C1242.2 709.7 1242.8 711.3 1245.1 712.8C1247.4 714.3 1252.3 717.7 1253.8 718.7" fill="none" stroke="#fdd835" stroke-width="1.2" stroke-linejoin="round"/>
</g>
<!-- price axis -->
<rect x="1499" y="28" width="1" height="812" fill="#8a8d96"/>
<g font-size="10" letter-spacing="0.5" fill="#d1d4dc">
<text x="1507" y="83.1">5.400%</text><text x="1507" y="125.9">5.200%</text><text x="1507" y="168.7">5.000%</text><text x="1507" y="211.5">4.800%</text><text x="1507" y="254.3">4.600%</text><text x="1507" y="297.1">4.400%</text><text x="1507" y="339.9">4.200%</text><text x="1507" y="382.7">4.000%</text><text x="1507" y="425.5">3.800%</text><text x="1507" y="511.1">3.400%</text><text x="1507" y="553.9">3.200%</text><text x="1507" y="596.7">3.000%</text>
</g>
<g font-size="10" letter-spacing="0.5" fill="#d1d4dc" clip-path="url(#ra)">
<text x="1507.5" y="627.7">70.00</text><text x="1507.5" y="653.7">60.00</text><text x="1507.5" y="679.7">50.00</text><text x="1507.5" y="705.7">40.00</text><text x="1507.5" y="731.7">30.00</text><text x="1507.5" y="757.7">20.00</text><text x="1507.5" y="783.7">10.00</text>
</g>
<g font-size="11" fill="#d1d4dc" text-anchor="middle">
<text x="43.8" y="832">14</text><text x="130.7" y="832" font-weight="bold">2023</text><text x="237.8" y="832">Mar</text><text x="348.0" y="832">May</text><text x="463.0" y="832">Jul</text><text x="575.3" y="832">Sep</text><text x="683.0" y="832">Nov</text><text x="790.8" y="832" font-weight="bold">2024</text><text x="903.0" y="832">Mar</text><text x="1013.3" y="832">May</text><text x="1123.3" y="832">Jul</text><text x="1238.4" y="832">Sep</text><text x="1350.9" y="832">Nov</text><text x="1461.2" y="832" font-weight="bold">2025</text>
</g>
<!-- % box -->
<rect x="1503.5" y="31.5" width="53" height="25" rx="4" fill="#131722" stroke="#2a2e39"/>
<text x="1512" y="48" font-size="11" font-weight="bold" fill="#d1d4dc">%</text>
<!-- red label -->
<rect x="1500" y="341" width="51" height="15" rx="2" fill="#f23645"/>
<text x="1507" y="351.8" font-size="10" letter-spacing="0.5" fill="#ffffff">4.143%</text>
<!-- current price labels -->
<rect x="1458" y="447" width="44" height="15" rx="2" fill="#ffffff"/>
<text x="1462" y="458" font-size="10" letter-spacing="0.3" fill="#131722">US02Y</text>
<rect x="1500" y="447" width="57" height="27" rx="2" fill="#ffffff"/>
<rect x="1499" y="447" width="1" height="27" fill="#8a8d96"/>
<text x="1507" y="458" font-size="10" letter-spacing="0.5" fill="#131722">3.650%</text>
<text x="1507" y="470" font-size="10" letter-spacing="0.5" fill="#5d606b">07:56:19</text>
<!-- rsi labels -->
<rect x="1423" y="712" width="118" height="15" rx="2" fill="#fdeb3b"/>
<text x="1426.5" y="723.5" font-size="10.5" fill="#131722">RSI-based MA</text>
<text x="1507.5" y="723.2" font-size="10" letter-spacing="0.5" fill="#131722">33.45</text>
<rect x="1476" y="729" width="65" height="15" rx="2" fill="#7e57c2"/>
<text x="1479.5" y="740.5" font-size="10" fill="#ffffff">RSI</text>
<text x="1507.5" y="740.2" font-size="10" letter-spacing="0.5" fill="#ffffff">26.84</text>
<rect x="1499" y="712" width="1" height="32" fill="#8a8d96"/>
<!-- legends -->
<g stroke-width="0.3">
<text x="10.5" y="20" font-size="12.5" fill="#d1d4dc" stroke="#d1d4dc">Capsey published on TradingView.com, Sep 10, 2024 15:03 UTC+2</text>
<text x="18.5" y="47" font-size="12.3" fill="#d1d4dc" stroke="#d1d4dc">US Government Bonds 2 YR Yield, 1D, TVC</text>
<text x="266" y="47" font-size="12.3" fill="#d1d4dc" stroke="#d1d4dc"><tspan fill="#b2b5be" stroke="#b2b5be">O</tspan>3.671%</text>
<text x="323.5" y="47" font-size="12.3" fill="#d1d4dc" stroke="#d1d4dc"><tspan fill="#b2b5be" stroke="#b2b5be">H</tspan>3.698%</text>
<text x="383.7" y="47" font-size="12.3" fill="#d1d4dc" stroke="#d1d4dc"><tspan fill="#b2b5be" stroke="#b2b5be">L</tspan>3.650%</text>
<text x="440.5" y="47" font-size="12.3" fill="#d1d4dc" stroke="#d1d4dc"><tspan fill="#b2b5be" stroke="#b2b5be">C</tspan>3.650%</text>
<text x="500.6" y="47" font-size="12.3" fill="#d1d4dc" stroke="#d1d4dc">−0.021 (−0.57%)</text>
<text x="18" y="636" font-size="12.1" fill="#d1d4dc" stroke="#d1d4dc">RSI (14, close)</text>
<text x="106" y="636" font-size="12.5" fill="#7e57c2" stroke="#7e57c2">26.84</text>
<text x="146" y="636" font-size="12.7" font-weight="bold" fill="#fbe43a" stroke="#fbe43a">33.45</text>
<text x="189.5" y="635.5" font-size="10.5" font-weight="bold" text-anchor="middle" fill="#d1d4dc" stroke="#d1d4dc">∅</text><text x="204.8" y="635.5" font-size="10.5" font-weight="bold" text-anchor="middle" fill="#d1d4dc" stroke="#d1d4dc">∅</text><text x="220.1" y="635.5" font-size="10.5" font-weight="bold" text-anchor="middle" fill="#d1d4dc" stroke="#d1d4dc">∅</text><text x="235.4" y="635.5" font-size="10.5" font-weight="bold" text-anchor="middle" fill="#d1d4dc" stroke="#d1d4dc">∅</text>
<text x="18.3" y="802" font-size="12.6" fill="#d1d4dc" stroke="#d1d4dc">Funding Rate [CryptoSea] (ohlc4, 10)</text>
<text x="235.5" y="802" font-size="12.6" fill="#f23645" stroke="#f23645">−0.16%</text>
</g>
<!-- logo -->
<g fill="#d1d4dc">
<path d="M10 853H18V863H13.5V857.3H10Z"/>
<circle cx="21" cy="855.2" r="2"/>
<path d="M24.4 853H29.2L26 862.8H21.3Z"/>
</g>
<text x="33.2" y="864" font-size="13.4" fill="#d1d4dc" stroke="#d1d4dc" stroke-width="0.4">TradingView</text>
</svg>
</body></html>
